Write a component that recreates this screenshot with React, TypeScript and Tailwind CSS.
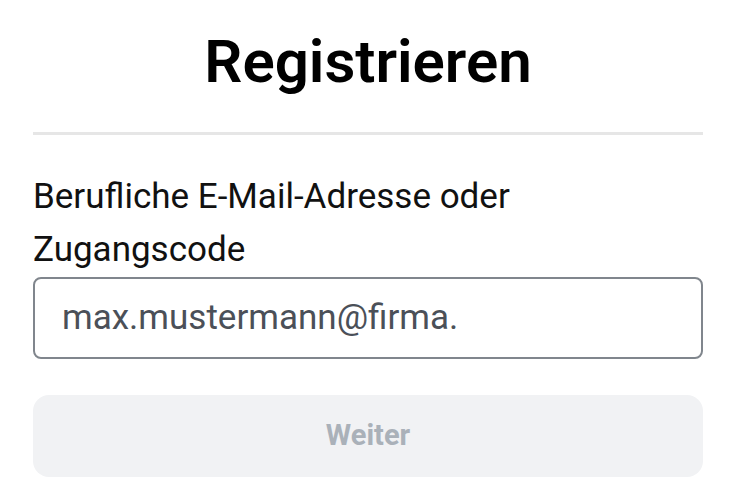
export default function App() {
  return (
    <div className="min-h-screen bg-white px-[33px] font-['Roboto',sans-serif]">
      <h1 className="pt-[26px] pb-[34px] text-center text-[60px] font-semibold leading-[72px] text-black">
        Registrieren
      </h1>
      <div className="h-[3px] bg-[#e6e6e6]" />
      <label className="mt-[35px] block text-[35px] leading-[53px] text-[#111]">
        Berufliche E-Mail-Adresse oder Zugangscode
      </label>
      <div className="mt-[1px] flex h-[82px] items-center rounded-[8px] border-2 border-[#80868d] px-[27px]">
        <span className="text-[35px] text-[#4b5058]">max.mustermann@firma.</span>
      </div>
      <button className="mt-[36px] flex h-[82px] w-full items-center justify-center rounded-[16px] bg-[#f1f2f4] text-[29px] font-bold text-[#aab1b9]">
        Weiter
      </button>
    </div>
  );
}
